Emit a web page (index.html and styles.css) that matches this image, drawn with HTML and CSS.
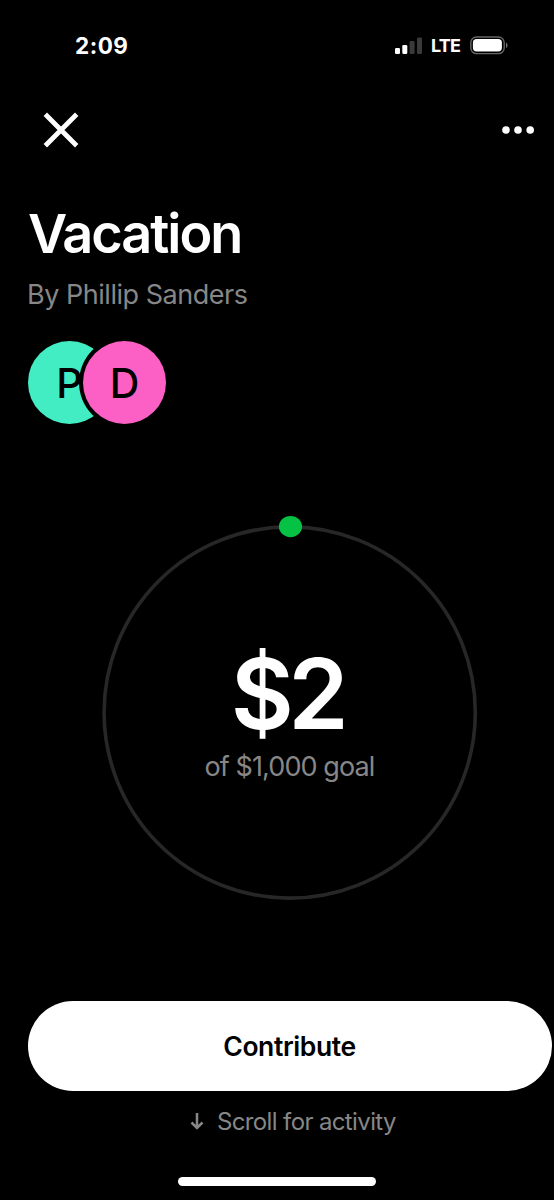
FILE: index.html
```html
<!DOCTYPE html>
<html lang="en">
<head>
<meta charset="utf-8">
<title>Vacation</title>
<link rel="stylesheet" href="styles.css">
</head>
<body>
<main class="screen">
  <div class="status">
    <span class="time">2:09</span>
    <svg class="signal" width="27" height="17" viewBox="0 0 27 17" fill="#fff">
      <rect x="0" y="11" width="5" height="6" rx="1.3"/>
      <rect x="7.3" y="8" width="5" height="9" rx="1.3"/>
      <rect x="14.6" y="4" width="5" height="13" rx="1.3" fill="#3a3a3b"/>
      <rect x="22" y="0.5" width="5" height="16.5" rx="1.3" fill="#3a3a3b"/>
    </svg>
    <span class="carrier">LTE</span>
    <svg class="battery" width="39" height="19" viewBox="0 0 39 19">
      <rect x="0.8" y="1" width="33.4" height="16.6" rx="5.6" fill="none" stroke="#666" stroke-width="1.4"/>
      <rect x="2.9" y="3.1" width="29" height="12.4" rx="3.7" fill="#fff"/>
      <path d="M36 6.8c2 .6 2 4.6 0 5.2z" fill="#777"/>
    </svg>
  </div>
  <nav class="nav">
    <svg width="36" height="36" viewBox="0 0 36 36" fill="none" stroke="#fff" stroke-width="4.8"><path d="M2.3 2.3 33.7 33.7M33.7 2.3 2.3 33.7"/></svg>
    <svg width="34" height="10" viewBox="0 0 34 10" fill="#fff"><circle cx="5" cy="5" r="3.8"/><circle cx="17" cy="5" r="3.8"/><circle cx="29.2" cy="5" r="3.8"/></svg>
  </nav>
  <h1 class="title">Vacation</h1>
  <p class="byline">By Phillip Sanders</p>
  <div class="people">
    <span class="avatar mint">P</span>
    <span class="avatar pink">D</span>
  </div>
  <section class="goal">
    <svg class="ring" width="375" height="375" viewBox="0 0 375 375"><circle cx="187.7" cy="187.5" r="185.6" fill="none" stroke="#272727" stroke-width="3.6"/><ellipse cx="188.5" cy="1.6" rx="11.6" ry="10.6" fill="#05c244"/></svg>
    <span class="amount">$2</span>
    <span class="target">of $1,000 goal</span>
  </section>
  <button class="contribute"><span>Contribute</span></button>
  <div class="hint">
    <svg width="14" height="18" viewBox="0 0 14 18" fill="none" stroke="#878787" stroke-width="2.5"><path d="M7 0V15M1.5 9.5 7 15 12.5 9.5"/></svg>
    <span class="hint-text">Scroll for activity</span>
  </div>
  <div class="home"></div>
</main>
</body>
</html>
```
FILE: styles.css
```css
* { box-sizing: border-box; margin: 0; }
body { background: #000; color: #fff; font-family: Inter, "Liberation Sans", sans-serif; }
.screen { width: 554px; height: 1200px; overflow: hidden; background: #000; white-space: nowrap; }
.status { display: flex; align-items: center; height: 90px; padding-left: 75px; }
.time { width: 320px; font-size: 22.5px; font-weight: 700; letter-spacing: 0.5px; }
.carrier { width: 39px; margin-left: 9px; font-size: 18px; font-weight: 700; letter-spacing: -0.8px; }
.nav { display: flex; align-items: center; justify-content: space-between; height: 80px; padding: 0 19px 0 43px; }
.title { margin-top: 31px; padding-left: 28px; font-size: 54px; line-height: 66px; font-weight: 600; letter-spacing: -2px; }
.byline { margin-top: 8px; padding-left: 27px; font-size: 27px; line-height: 40px; color: #878787; letter-spacing: -0.47px; }
.people { display: flex; margin-top: 26px; padding-left: 28px; }
.avatar { width: 83px; height: 83px; border-radius: 50%; color: #000; font-size: 41px; line-height: 84px; font-weight: 550; text-align: center; }
.mint { background: #43edc3; }
.pink { margin-left: -28px; background: #fd60c5; box-shadow: 0 0 0 4px #000; }
.goal { position: relative; display: flex; flex-direction: column; align-items: center; width: 375px; height: 375px; margin: 101px 0 0 102px; padding-top: 110px; }
.ring { position: absolute; top: 0; left: 0; overflow: visible; }
.amount { padding-right: 5px; font-size: 97px; line-height: 118px; font-weight: 600; letter-spacing: -5.5px; }
.target { margin-top: -3px; font-size: 27px; line-height: 34px; color: #878787; letter-spacing: -0.9px; }
.contribute { display: block; width: 524px; height: 90px; margin: 101px 0 0 28px; border: 0; border-radius: 45px; background: #fff; color: #000; font: 600 26.5px/90px Inter, sans-serif; letter-spacing: -0.4px; padding: 0 1px 0 0; }
.contribute span { display: block; }
.hint { display: flex; align-items: center; height: 40px; margin-top: 11px; padding-left: 190px; color: #878787; font-size: 24px; }
.hint-text { margin: -2px 0 0 13px; letter-spacing: -0.63px; }
.home { width: 198px; height: 9px; margin: 35px 0 0 178px; border-radius: 5px; background: #fff; }
```
